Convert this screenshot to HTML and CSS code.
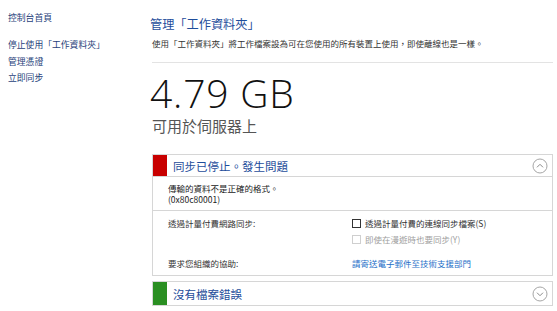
FILE: index.html
```html
<!DOCTYPE html>
<html lang="zh-Hant">
<head>
<meta charset="utf-8">
<link rel="stylesheet" href="styles.css">
</head>
<body>
<div class="page">
  <nav class="nav">
    <a class="nav-item home">控制台首頁</a>
    <a class="nav-item">停止使用「工作資料夾」</a>
    <a class="nav-item">管理憑證</a>
    <a class="nav-item">立即同步</a>
  </nav>
  <main class="main">
    <h1 class="title">管理「工作資料夾」</h1>
    <p class="desc">使用「工作資料夾」將工作檔案設為可在您使用的所有裝置上使用，即使離線也是一樣。</p>
    <div class="rule"></div>
    <div class="size">4.79 GB</div>
    <div class="size-sub">可用於伺服器上</div>

    <section class="panel">
      <div class="panel-head">
        <span class="mark red"></span>
        <span class="panel-title">同步已停止。發生問題</span>
        <svg class="chev" width="16" height="16" viewBox="0 0 16 16"><circle cx="8" cy="8" r="7" fill="none" stroke="#a6a6a6" stroke-width="1"/><path d="M5 9.3 L8 6.3 L11 9.3" fill="none" stroke="#8a8a8a" stroke-width="1"/></svg>
      </div>
      <div class="panel-msg">
        <div>傳輸的資料不是正確的格式。</div>
        <div>(0x80c80001)</div>
      </div>
      <div class="panel-opts">
        <div class="opt-row">
          <div class="opt-label">透過計量付費網路同步:</div>
          <div class="opt-val">
            <label class="check"><span class="box"></span>透過計量付費的連線同步檔案(S)</label>
            <label class="check disabled"><span class="box"></span>即使在漫遊時也要同步(Y)</label>
          </div>
        </div>
        <div class="opt-row help">
          <div class="opt-label">要求您組織的協助:</div>
          <div class="opt-val"><a class="link">請寄送電子郵件至技術支援部門</a></div>
        </div>
      </div>
    </section>

    <section class="panel second">
      <div class="panel-head last">
        <span class="mark green"></span>
        <span class="panel-title">沒有檔案錯誤</span>
        <svg class="chev" width="16" height="16" viewBox="0 0 16 16"><circle cx="8" cy="8" r="7" fill="none" stroke="#a6a6a6" stroke-width="1"/><path d="M5 6.7 L8 9.7 L11 6.7" fill="none" stroke="#8a8a8a" stroke-width="1"/></svg>
      </div>
    </section>
  </main>
</div>
</body>
</html>
```
FILE: styles.css
```css
* { box-sizing: border-box; }
html, body { margin: 0; padding: 0; background: #fff; }
body {
  font-family: "Noto Sans CJK TC", "Noto Sans", sans-serif;
  color: #333;
  width: 557px;
  height: 311px;
  overflow: hidden;
}
.page {
  display: grid;
  grid-template-columns: 152px 401px;
}
.nav {
  display: flex;
  flex-direction: column;
  padding: 12px 0 0 8px;
}
.nav-item {
  font-size: 8.8px;
  line-height: 16.5px;
  color: #1f3f7a;
  white-space: nowrap;
}
.nav-item.home { margin-bottom: 13px; line-height: 12px; }
.main { display: flex; flex-direction: column; }
.title {
  margin: 16px 0 0 -2px;
  font-size: 12.2px;
  line-height: 16px;
  font-weight: normal;
  color: #1e4d9b;
}
.desc {
  margin: 5px 0 0 0;
  font-size: 8.5px;
  line-height: 12px;
  color: #333;
  white-space: nowrap;
}
.rule {
  margin-top: 13px;
  height: 1px;
  background: #e3e3e3;
}
.size {
  margin-top: 8px;
  margin-left: -2px;
  font-family: "Open Sans", "Noto Sans", sans-serif;
  font-weight: 300;
  font-size: 39px;
  line-height: 44px;
  color: #111;
  letter-spacing: 0.8px;
}
.size-sub {
  margin-top: 2px;
  font-size: 15px;
  line-height: 18px;
  color: #555;
}
.panel {
  margin-top: 19px;
  border: 1px solid #d6d6d6;
}
.panel.second { margin-top: 5px; }
.panel-head {
  display: flex;
  align-items: center;
  height: 22px;
  border-bottom: 1px solid #d6d6d6;
}
.panel-head.last { height: 23px; border-bottom: none; }
.mark {
  width: 14px;
  align-self: stretch;
}
.mark.red { background: #c80000; }
.mark.green { background: #2a8f22; }
.panel-title {
  margin-left: 6px;
  font-size: 11.5px;
  color: #1e4d9b;
  flex: 1;
}
.chev { margin-right: 4px; }
.panel-msg {
  padding: 6px 0 6px 15px;
  font-size: 8.5px;
  line-height: 10.5px;
  color: #222;
  border-bottom: 1px solid #d6d6d6;
}
.panel-opts {
  padding: 5px 0 4px 15px;
  font-size: 8.5px;
  color: #333;
}
.opt-row { display: flex; }
.opt-row.help { margin-top: 9px; }
.opt-label { width: 184px; line-height: 15px; }
.opt-val { display: flex; flex-direction: column; }
.check {
  display: flex;
  align-items: center;
  line-height: 15px;
  margin-top: 0;
}
.check + .check { margin-top: 1px; }
.box {
  width: 9px;
  height: 9px;
  border: 1px solid #333;
  margin-right: 4px;
  background: #fff;
}
.check.disabled { color: #a0a0a0; }
.check.disabled .box { border-color: #cfcfcf; }
.link { color: #1e6fc8; line-height: 15px; }
```
